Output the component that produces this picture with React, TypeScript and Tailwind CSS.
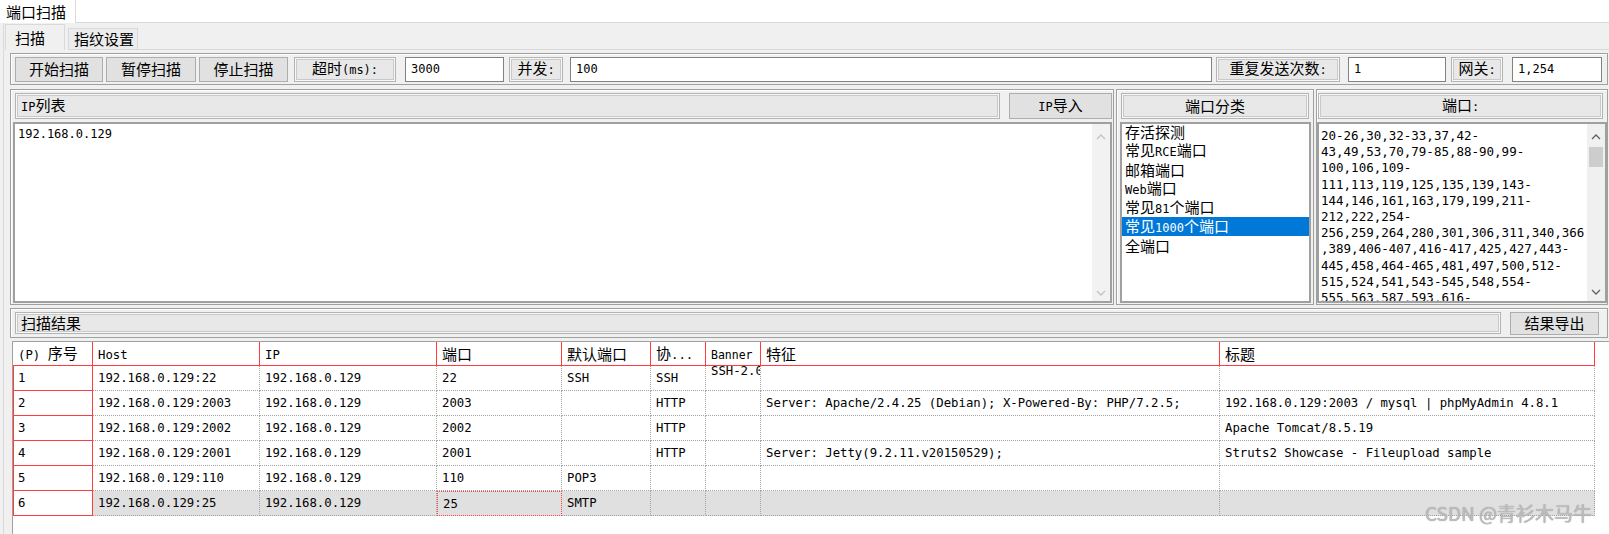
import React from 'react'

const cjkCls = "font-['Noto_Sans_CJK_SC',sans-serif] text-[15px]"
const uiMono = "font-['DejaVu_Sans_Mono',monospace] text-[12px]"
const tblMono = "font-['DejaVu_Sans_Mono',monospace] text-[12.3px]"

function Mix({ s, a = uiMono }: { s: string; a?: string }) {
  const parts = s.split(/([^\x00-\x7f]+)/).filter(Boolean)
  return (
    <span className="whitespace-pre">
      {parts.map((p, i) =>
        /[^\x00-\x7f]/.test(p) ? (
          <span key={i} className={cjkCls}>
            {p}
          </span>
        ) : (
          <span key={i} className={a}>
            {p}
          </span>
        )
      )}
    </span>
  )
}

function Btn({ label, w, h = 'h-[25px]' }: { label: string; w: string; h?: string }) {
  return (
    <div className={`${w} ${h} flex items-center justify-center border border-[#adadad] bg-[#e1e1e1] leading-[18px]`}>
      <Mix s={label} />
    </div>
  )
}

function Label({ label, w, h = 'h-[25px]', left }: { label: string; w: string; h?: string; left?: boolean }) {
  return (
    <div
      className={`${w} ${h} flex items-center ${left ? 'justify-start pl-[5px]' : 'justify-center'} border border-[#b4b4b4] bg-[#e8e8e8] shadow-[inset_0_0_0_1px_#f7f7f7,inset_0_0_0_2px_#c9c9c9] leading-[18px]`}
    >
      <Mix s={label} />
    </div>
  )
}

function Input({ value, w }: { value: string; w: string }) {
  return (
    <div className={`${w} h-[25px] flex items-center bg-white border border-[#828282] pl-[5px] leading-[18px]`}>
      <span className={uiMono}>{value}</span>
    </div>
  )
}

function Chevron({ up, color }: { up?: boolean; color: string }) {
  return (
    <svg width="10" height="8" viewBox="0 0 10 8" className="shrink-0">
      <polyline
        points={up ? '1,6 5,2 9,6' : '1,2 5,6 9,2'}
        fill="none"
        stroke={color}
        strokeWidth="1.3"
      />
    </svg>
  )
}

const etched = 'border border-[#a0a0a0] shadow-[inset_1px_1px_0_#ffffff]'
const sunken = 'border-2 border-[#a0a0a0] bg-white'

const portLines = [
  '20-26,30,32-33,37,42-',
  '43,49,53,70,79-85,88-90,99-',
  '100,106,109-',
  '111,113,119,125,135,139,143-',
  '144,146,161,163,179,199,211-',
  '212,222,254-',
  '256,259,264,280,301,306,311,340,366',
  ',389,406-407,416-417,425,427,443-',
  '445,458,464-465,481,497,500,512-',
  '515,524,541,543-545,548,554-',
  '555,563,587,593,616-',
]

const categories = ['存活探测', '常见RCE端口', '邮箱端口', 'Web端口', '常见81个端口', '常见1000个端口', '全端口']

const cols = ['w-[80px]', 'w-[167px]', 'w-[177px]', 'w-[125px]', 'w-[89px]', 'w-[55px]', 'w-[55px]', 'w-[459px]', 'w-[375px]']
const headers = ['(P) 序号', 'Host', 'IP', '端口', '默认端口', '协...', 'Banner', '特征', '标题']

const rows = [
  ['1', '192.168.0.129:22', '192.168.0.129', '22', 'SSH', 'SSH', 'SSH-2.0-OpenSSH_7.4p1', '', ''],
  ['2', '192.168.0.129:2003', '192.168.0.129', '2003', '', 'HTTP', '', 'Server: Apache/2.4.25 (Debian); X-Powered-By: PHP/7.2.5;', '192.168.0.129:2003 / mysql | phpMyAdmin 4.8.1'],
  ['3', '192.168.0.129:2002', '192.168.0.129', '2002', '', 'HTTP', '', '', 'Apache Tomcat/8.5.19'],
  ['4', '192.168.0.129:2001', '192.168.0.129', '2001', '', 'HTTP', '', 'Server: Jetty(9.2.11.v20150529);', 'Struts2 Showcase - Fileupload sample'],
  ['5', '192.168.0.129:110', '192.168.0.129', '110', 'POP3', '', '', '', ''],
  ['6', '192.168.0.129:25', '192.168.0.129', '25', 'SMTP', '', '', '', ''],
]

function ResultTable() {
  return (
    <div className="flex-1 ml-[8px] border-l border-t border-[#a0a0a0] bg-white overflow-hidden">
      <div className="flex h-[24px]">
        {headers.map((h, i) => (
          <div
            key={i}
            className={`${cols[i]} shrink-0 h-full flex items-center pl-[5px] border-r border-b border-[#ff3b3b] leading-[18px] whitespace-nowrap overflow-hidden`}
          >
            <Mix s={h} a={i === 6 ? "font-['DejaVu_Sans_Mono',monospace] text-[11.5px]" : tblMono} />
          </div>
        ))}
      </div>
      {rows.map((r, ri) => {
        const sel = ri === rows.length - 1
        return (
          <div key={ri} className="flex h-[25px]">
            {r.map((c, ci) => {
              if (ci === 0)
                return (
                  <div
                    key={ci}
                    className={`${cols[0]} shrink-0 h-full flex items-center pl-[4px] border border-t-0 border-[#ff3b3b] bg-white ${tblMono}`}
                  >
                    {c}
                  </div>
                )
              const bg = sel ? 'bg-[#e0e0e0]' : 'bg-white'
              const bd =
                sel && ci === 3
                  ? 'border border-dotted border-[#ff4040]'
                  : 'border-r border-b border-dotted border-[#a3a3a3]'
              const align = ci === 6 ? 'items-start leading-[10px]' : 'items-center leading-[16px]'
              return (
                <div
                  key={ci}
                  className={`${cols[ci]} shrink-0 h-full flex ${align} pl-[5px] ${bd} ${bg} ${tblMono} whitespace-nowrap overflow-hidden`}
                >
                  {c}
                </div>
              )
            })}
          </div>
        )
      })}
    </div>
  )
}

export default function App() {
  return (
    <div className="relative w-[1609px] h-[534px] overflow-hidden bg-[#f0f0f0] text-black flex flex-col">
      {/* top tab strip */}
      <div className="flex h-[23px] bg-white shrink-0">
        <div className="w-[76px] h-full border-r border-[#d9d9d9] pl-[6px] flex items-center leading-[18px]">
          <Mix s="端口扫描" />
        </div>
        <div className="flex-1 border-b border-[#d9d9d9]" />
      </div>

      <div className="flex-1 ml-[3px] border-l border-[#d9d9d9] flex flex-col min-h-0">
        {/* sub tabs */}
        <div className="flex items-end h-[27px] shrink-0">
          <div className="ml-[1px] w-[60px] h-[26px] border-t border-l border-r border-[#d9d9d9] pl-[9px] flex items-center leading-[18px]">
            <Mix s="扫描" />
          </div>
          <div className="ml-[3px] w-[70px] h-[22px] border border-[#d9d9d9] bg-[#ececec] pl-[5px] flex items-center leading-[18px]">
            <Mix s="指纹设置" />
          </div>
          <div className="flex-1 border-b border-[#d9d9d9]" />
        </div>

        {/* toolbar */}
        <div className={`mt-[3px] ml-[6px] mr-[1px] h-[32px] shrink-0 ${etched} flex items-center pl-[4px]`}>
          <Btn label="开始扫描" w="w-[88px]" />
          <div className="ml-[3px]">
            <Btn label="暂停扫描" w="w-[90px]" />
          </div>
          <div className="ml-[3px]">
            <Btn label="停止扫描" w="w-[89px]" />
          </div>
          <div className="ml-[6px]">
            <Label label="超时(ms):" w="w-[102px]" />
          </div>
          <div className="ml-[9px]">
            <Input value="3000" w="w-[99px]" />
          </div>
          <div className="ml-[5px]">
            <Label label="并发:" w="w-[54px]" />
          </div>
          <div className="ml-[7px]">
            <Input value="100" w="w-[642px]" />
          </div>
          <div className="ml-[4px]">
            <Label label="重复发送次数:" w="w-[124px]" />
          </div>
          <div className="ml-[8px]">
            <Input value="1" w="w-[98px]" />
          </div>
          <div className="ml-[5px]">
            <Label label="网关:" w="w-[52px]" />
          </div>
          <div className="ml-[9px] flex-1 mr-[5px]">
            <Input value="1,254" w="w-full" />
          </div>
        </div>

        {/* panels */}
        <div className="mt-[4px] ml-[6px] mr-[1px] h-[216px] shrink-0 flex">
          {/* IP list */}
          <div className={`w-[1104px] h-full ${etched} flex flex-col`}>
            <div className="mt-[3px] ml-[4px] flex h-[26px]">
              <Label label="IP列表" w="w-[985px]" h="h-[26px]" left />
              <div className="ml-[9px]">
                <Btn label="IP导入" w="w-[103px]" h="h-[26px]" />
              </div>
            </div>
            <div className={`mt-[3px] ml-[2px] w-[1099px] h-[181px] ${sunken} flex`}>
              <div className={`flex-1 pl-[3px] pt-[2px] leading-[16px] ${uiMono}`}>192.168.0.129</div>
              <div className="w-[18px] h-full bg-[#f2f2f2] flex flex-col items-center">
                <div className="mt-[9px]">
                  <Chevron up color="#c2c2c2" />
                </div>
                <div className="flex-1" />
                <div className="mb-[4px]">
                  <Chevron color="#c2c2c2" />
                </div>
              </div>
            </div>
          </div>

          {/* port categories */}
          <div className={`ml-[2px] w-[198px] h-full ${etched} flex flex-col`}>
            <div className="mt-[3px] ml-[4px]">
              <Label label="端口分类" w="w-[188px]" h="h-[26px]" />
            </div>
            <div className={`mt-[3px] ml-[3px] w-[191px] h-[181px] ${sunken} overflow-hidden`}>
              <div className="-mt-[2px] flex flex-col">
                {categories.map((c, i) =>
                  i === 5 ? (
                    <div key={c} className="h-[19px] flex items-center pl-[3px] bg-[#0078d7] text-white leading-[18px]">
                      <Mix s={c} />
                    </div>
                  ) : (
                    <div key={c} className="h-[19px] flex items-center pl-[3px] leading-[18px]">
                      <Mix s={c} />
                    </div>
                  )
                )}
              </div>
            </div>
          </div>

          {/* ports */}
          <div className={`ml-[2px] flex-1 h-full ${etched} flex flex-col`}>
            <div className="mt-[3px] ml-[1px] mr-[4px]">
              <Label label="端口:" w="w-full" h="h-[26px]" />
            </div>
            <div className={`mt-[3px] h-[181px] ${sunken} flex overflow-hidden`}>
              <div className="flex-1 pl-[2px] pt-[4px] overflow-hidden leading-[16.2px] font-['DejaVu_Sans_Mono',monospace] text-[12.5px]">
                {portLines.map((l, i) => (
                  <div key={i} className="whitespace-nowrap">
                    {l}
                  </div>
                ))}
              </div>
              <div className="w-[18px] h-full bg-[#f0f0f0] flex flex-col items-center">
                <div className="mt-[9px]">
                  <Chevron up color="#606060" />
                </div>
                <div className="mt-[6px] w-[14px] h-[20px] bg-[#cdcdcd]" />
                <div className="flex-1" />
                <div className="mb-[5px]">
                  <Chevron color="#606060" />
                </div>
              </div>
            </div>
          </div>
        </div>

        {/* results header */}
        <div className={`mt-[3px] ml-[6px] mr-[1px] h-[30px] shrink-0 ${etched} flex items-center pl-[4px]`}>
          <Label label="扫描结果" w="w-[1486px]" h="h-[22px]" left />
          <div className="ml-[9px]">
            <Btn label="结果导出" w="w-[89px]" h="h-[23px]" />
          </div>
        </div>

        <div className="mt-[3px] flex-1 min-h-0 flex">
          <ResultTable />
        </div>
      </div>

      <div className="absolute right-[17px] bottom-[10px] leading-[22px] text-[19px] font-['Noto_Sans_CJK_SC',sans-serif] text-[#bdbdbd] [text-shadow:0_0_1px_#8a8a8a]">
        CSDN @青衫木马牛
      </div>
    </div>
  )
}
